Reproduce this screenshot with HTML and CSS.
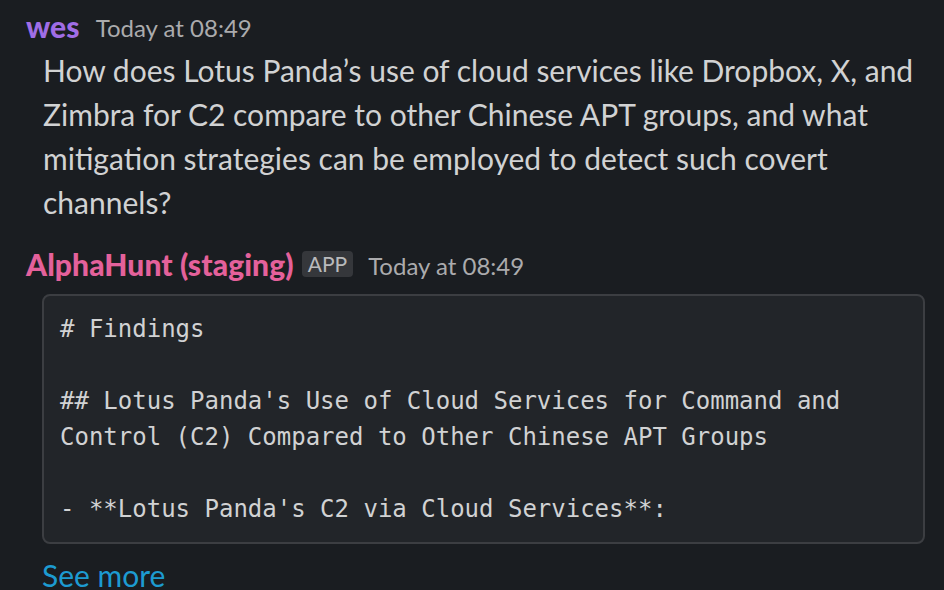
FILE: index.html
```html
<!DOCTYPE html>
<html>
<head>
<meta charset="utf-8">
<link rel="stylesheet" href="styles.css">
</head>
<body>
<div class="feed">
  <div class="msg">
    <div class="head">
      <span class="name name-wes">wes</span>
      <span class="time">Today at 08:49</span>
    </div>
    <div class="body">How does Lotus Panda’s use of cloud services like Dropbox, X, and Zimbra for C2 compare to other Chinese APT groups, and what mitigation strategies can be employed to detect such covert channels?</div>
  </div>
  <div class="msg msg-bot">
    <div class="head">
      <span class="name name-bot">AlphaHunt (staging)</span>
      <span class="badge">APP</span>
      <span class="time">Today at 08:49</span>
    </div>
    <pre class="code"># Findings

## Lotus Panda's Use of Cloud Services for Command and Control (C2) Compared to Other Chinese APT Groups

- **Lotus Panda's C2 via Cloud Services**:</pre>
    <a class="more" href="#">See more</a>
  </div>
</div>
</body>
</html>
```
FILE: styles.css
```css
html, body {
  margin: 0;
  padding: 0;
  background: #1a1d21;
  height: 100%;
  overflow: hidden;
}
.feed {
  padding: 4px 19px 0 26px;
  font-family: Lato, "Noto Sans", sans-serif;
  color: #d1d2d3;
}
.msg-bot {
  margin-top: 18px;
}
.head {
  display: flex;
  align-items: center;
  height: 44px;
  line-height: 44px;
}
.name {
  font-size: 30px;
  font-weight: 900;
  letter-spacing: 0.1px;
}
.name-wes { color: #a06de6; }
.name-bot { color: #e4619b; }
.time {
  font-size: 24px;
  color: #ababad;
  margin-left: 16px;
  padding-top: 4px;
}
.badge {
  margin-left: 8px;
  background: #35373b;
  color: #b9babc;
  font-size: 21px;
  line-height: 26px;
  padding: 0 6px;
  border-radius: 4px;
  font-weight: 400;
}
.badge + .time { margin-left: 15px; }
.body {
  margin-left: 17px;
  font-size: 30px;
  line-height: 44px;
}
.code {
  margin: 8px 0 0 16px;
  background: #222529;
  border: 2px solid #3c3e42;
  border-radius: 8px;
  padding: 15px 16px 15px;
  font-family: "DejaVu Sans Mono", monospace;
  font-size: 24px;
  line-height: 36px;
  color: #d1d2d3;
  white-space: pre-wrap;
}
.more {
  display: block;
  margin: 9px 0 0 16px;
  font-size: 30px;
  line-height: 44px;
  color: #1d9bd1;
  text-decoration: none;
}
```
